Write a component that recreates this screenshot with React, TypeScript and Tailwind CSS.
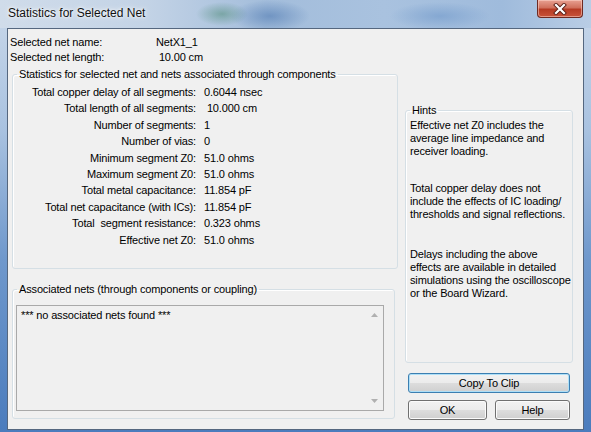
import React from "react";

const font = { fontFamily: '"Liberation Sans", Arial, sans-serif' };

function Btn({ children, w, def }: { children: React.ReactNode; w: string; def?: boolean }) {
  return (
    <button
      className={
        (def
          ? "border-[#3c7fb1] shadow-[inset_0_0_0_1px_#aedff7] "
          : "border-[#707070] shadow-[inset_0_0_0_1px_#fbfbfb] ") +
        w +
        " h-[20px] rounded-[3px] border bg-[linear-gradient(#f2f2f2_0%,#ebebeb_50%,#dddddd_50%,#cfcfcf_100%)] text-[11px] tracking-[-0.15px] text-black leading-[18px] flex items-center justify-center"
      }
    >
      {children}
    </button>
  );
}

const stats: [string, string][] = [
  ["Total copper delay of all segments:", "0.6044 nsec"],
  ["Total length of all segments:", " 10.000 cm"],
  ["Number of segments:", "1"],
  ["Number of vias:", "0"],
  ["Minimum segment Z0:", "51.0 ohms"],
  ["Maximum segment Z0:", "51.0 ohms"],
  ["Total metal capacitance:", "11.854 pF"],
  ["Total net capacitance (with ICs):", "11.854 pF"],
  ["Total  segment resistance:", "0.323 ohms"],
  ["Effective net Z0:", "51.0 ohms"],
];

export default function App() {
  return (
    <div
      className="w-[591px] h-[432px] overflow-hidden bg-[linear-gradient(180deg,#c9d8ea_0%,#a9c2e0_30%,#6f98cc_60%,#4b7cbd_100%)]"
      style={font}
    >
      {/* title bar */}
      <div className="h-[28px] flex items-start bg-[radial-gradient(ellipse_26px_12px_at_222px_14px,rgba(80,140,120,0.55)_0%,transparent_100%),radial-gradient(ellipse_40px_16px_at_270px_16px,rgba(92,132,184,0.7)_0%,transparent_100%),radial-gradient(ellipse_50px_14px_at_440px_16px,rgba(125,162,207,0.8)_0%,transparent_100%),linear-gradient(90deg,#d0dcea_0%,#c3d3e6_25%,#a3bddb_45%,#a9c2df_65%,#9fbbdc_85%,#b9cde5_100%)]">
        <div className="pl-[8px] pt-[5px] text-[12px] leading-[16px] text-[#111] [text-shadow:0_0_6px_#ffffff,0_0_3px_#ffffff]">
          Statistics for Selected Net
        </div>
        <div className="ml-auto mr-[8px] w-[46px] h-[18px] rounded-b-[4px] border border-t-0 border-[#6e2a22] bg-[linear-gradient(#e8a192_0%,#d0705c_45%,#b63b24_55%,#c8533a_100%)] flex items-center justify-center shadow-[inset_0_0_0_1px_rgba(255,220,210,0.5)]">
          <svg width="14" height="12" viewBox="0 0 14 12">
            <path d="M3 2 L11 10 M11 2 L3 10" stroke="#5a1e16" strokeWidth="4" strokeLinecap="square" />
            <path d="M3 2 L11 10 M11 2 L3 10" stroke="#ffffff" strokeWidth="2.2" strokeLinecap="square" />
          </svg>
        </div>
      </div>

      {/* client area */}
      <div className="ml-[7px] w-[577px] h-[402px] border border-[#55677f] bg-[#f0f0f0] text-[11px] tracking-[-0.15px] text-black flex">
        {/* left column */}
        <div className="w-[397px] pl-[2px] pt-[6px] flex flex-col">
          <div className="grid grid-cols-[146px_1fr] leading-[15px] whitespace-pre">
            <div>Selected net name:</div>
            <div>NetX1_1</div>
            <div>Selected net length:</div>
            <div> 10.00 cm</div>
          </div>

          <fieldset className="mt-[3px] ml-[2px] w-[386px] h-[201px] border border-[#d5dfe5] rounded-[3px] shadow-[inset_1px_1px_0_#ffffff]">
            <legend className="ml-[4px] px-[2px] leading-[13px]">
              Statistics for selected net and nets associated through components
            </legend>
            <div className="pt-[3px] grid grid-cols-[183px_1fr] gap-x-[8px] whitespace-pre leading-[16.4px]">
              {stats.map(([l, v]) => (
                <React.Fragment key={l}>
                  <div className="text-right">{l}</div>
                  <div>{v}</div>
                </React.Fragment>
              ))}
            </div>
          </fieldset>

          <fieldset className="mt-[14px] ml-[2px] w-[383px] h-[136px] border border-[#d5dfe5] rounded-[3px] shadow-[inset_1px_1px_0_#ffffff]">
            <legend className="ml-[4px] px-[2px] leading-[13px]">
              Associated nets (through components or coupling)
            </legend>
            <div className="mt-[9px] ml-[3px] w-[368px] h-[106px] border border-[#a9a9a9] flex">
              <div className="flex-1 pl-[4px] pt-[3px] leading-[13px]">*** no associated nets found ***</div>
              <div className="w-[17px] flex flex-col items-center justify-between py-[7px]">
                <svg width="7" height="4" viewBox="0 0 7 4">
                  <path d="M0 4 L3.5 0 L7 4 Z" fill="#b0b0b0" />
                </svg>
                <svg width="7" height="4" viewBox="0 0 7 4">
                  <path d="M0 0 L3.5 4 L7 0 Z" fill="#b0b0b0" />
                </svg>
              </div>
            </div>
          </fieldset>
        </div>

        {/* right column */}
        <div className="w-[168px] pt-[75px] flex flex-col">
          <fieldset className="w-[168px] h-[259px] border border-[#d5dfe5] rounded-[3px] shadow-[inset_1px_1px_0_#ffffff]">
            <legend className="ml-[4px] px-[2px] leading-[13px]">Hints</legend>
            <div className="pl-[4px] pt-[2px] leading-[13px] whitespace-nowrap">
              <div>
                Effective net Z0 includes the
                <br />
                average line impedance and
                <br />
                receiver loading.
              </div>
              <div className="mt-[24px]">
                Total copper delay does not
                <br />
                include the effects of IC loading/
                <br />
                thresholds and signal reflections.
              </div>
              <div className="mt-[27px]">
                Delays including the above
                <br />
                effects are available in detailed
                <br />
                simulations using the oscilloscope
                <br />
                or the Board Wizard.
              </div>
            </div>
          </fieldset>
          <div className="ml-[3px] mt-[10px] flex flex-col gap-[7px]">
            <Btn w="w-[162px]" def>
              Copy To Clip
            </Btn>
            <div className="flex gap-[8px]">
              <Btn w="w-[79px]">OK</Btn>
              <Btn w="w-[75px]">Help</Btn>
            </div>
          </div>
        </div>
      </div>
    </div>
  );
}
